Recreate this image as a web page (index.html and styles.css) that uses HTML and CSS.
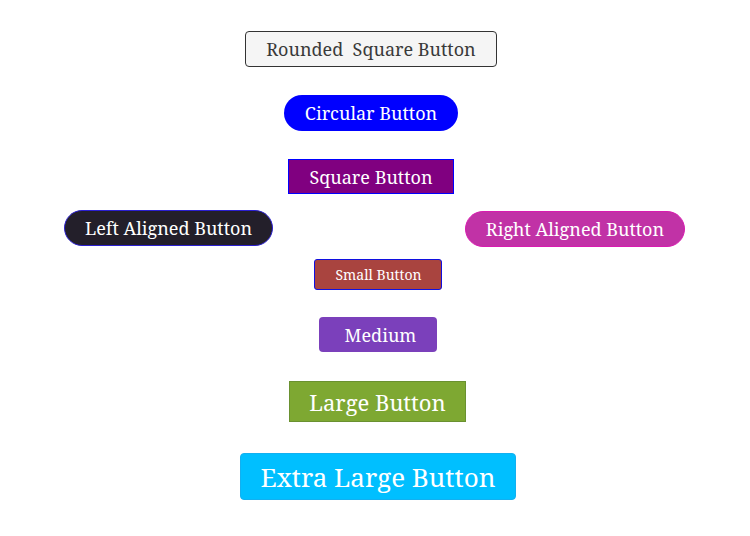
FILE: index.html
```html
<!DOCTYPE html>
<html>
<head>
<meta charset="utf-8">
<link rel="stylesheet" href="styles.css">
</head>
<body>
<div class="page">
  <div class="row row-a"><button class="btn rounded-square">Rounded&nbsp; Square Button</button></div>
  <div class="row row-b"><button class="btn circular">Circular Button</button></div>
  <div class="row row-c"><button class="btn square">Square Button</button></div>
  <div class="row row-split">
    <button class="btn left-aligned">Left Aligned Button</button>
    <button class="btn right-aligned">Right Aligned Button</button>
  </div>
  <div class="row row-small"><button class="btn small">Small Button</button></div>
  <div class="row row-medium"><button class="btn medium">Medium</button></div>
  <div class="row row-large"><button class="btn large">Large Button</button></div>
  <div class="row row-xl"><button class="btn xlarge">Extra Large Button</button></div>
</div>
</body>
</html>
```
FILE: styles.css
```css
html, body { margin: 0; padding: 0; background: #fff; }
body { font-family: "Noto Serif", "Droid Serif", serif; }
.page { width: 750px; height: 536px; display: flex; flex-direction: column; }
.row { display: flex; justify-content: center; }
.btn {
  font-family: inherit;
  color: #fff;
  box-sizing: border-box;
  display: flex; align-items: center; justify-content: center;
  padding: 0;
  cursor: pointer;
}
.row-a, .row-b, .row-c { padding-right: 8px; }
.row-a { margin-top: 31px; }
.rounded-square { width: 252px; height: 36px; background: #f5f5f5; border: 1px solid #333; border-radius: 4px; color: #3a3a3a; font-size: 18px; }
.row-b { margin-top: 28px; }
.circular { width: 174px; height: 36px; background: #0000ff; border: none; border-radius: 18px; font-size: 18px; }
.row-c { margin-top: 28px; }
.square { width: 166px; height: 35px; background: #800080; border: 1px solid #0000ff; border-radius: 0; font-size: 18px; }
.row-split { margin-top: 16px; justify-content: space-between; padding: 0 65px 0 64px; align-items: flex-start; }
.left-aligned { width: 209px; height: 36px; background: #231f2a; border: 1px solid #2b1fd0; border-radius: 18px; font-size: 18px; }
.right-aligned { width: 220px; height: 36px; margin-top: 1px; background: #c132a6; border: 1px solid #d81bb0; border-radius: 18px; font-size: 18px; }
.row-small { margin-top: 12px; padding-left: 6px; }
.small { width: 128px; height: 31px; background: #a9443f; border: 1px solid #1010e0; border-radius: 3px; font-size: 14px; padding-left: 1px; }
.row-medium { margin-top: 27px; padding-left: 6px; }
.medium { width: 118px; height: 35px; background: #7b40bb; border: none; border-radius: 4px; font-size: 18px; padding-left: 5px; }
.row-large { margin-top: 29px; padding-left: 5px; }
.large { width: 177px; height: 41px; background: #7ea832; border: 1px solid #6a9130; border-radius: 0; font-size: 22px; }
.row-xl { margin-top: 31px; padding-left: 6px; }
.xlarge { width: 276px; height: 47px; background: #00bfff; border: 1px solid #13b0f0; border-radius: 4px; font-size: 26px; }
```
